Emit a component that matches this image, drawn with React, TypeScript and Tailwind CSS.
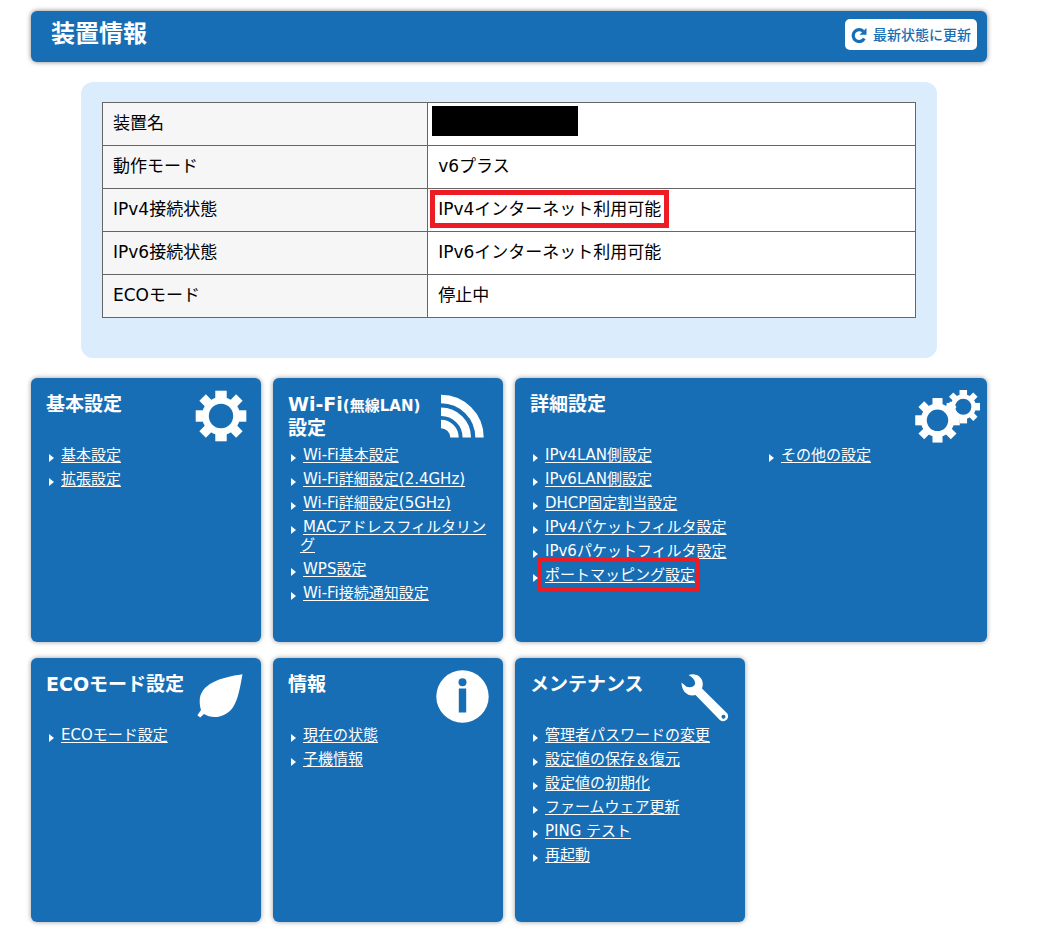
import type { ReactNode } from "react";

function GearShape({ cx, cy, scale }: { cx: number; cy: number; scale: number }) {
  return (
    <g transform={`translate(${cx} ${cy}) scale(${scale})`}>
      <circle r="15.6" fill="none" stroke="currentColor" strokeWidth="6.8" />
      {[0, 90, 180, 270].map((a) => (
        <rect key={a} x="-5.7" y="-25.3" width="11.4" height="10" transform={`rotate(${a})`} />
      ))}
      {[45, 135, 225, 315].map((a) => (
        <rect key={a} x="-4.6" y="-26" width="9.2" height="10" transform={`rotate(${a})`} />
      ))}
    </g>
  );
}

const GearIcon = () => (
  <svg width="52" height="52" viewBox="-26 -26 52 52" fill="currentColor" aria-hidden="true">
    <GearShape cx={0} cy={0} scale={1} />
  </svg>
);

const GearsIcon = () => (
  <svg width="66" height="54" viewBox="0 0 66 54" fill="currentColor" aria-hidden="true">
    <GearShape cx={22.5} cy={30.3} scale={0.88} />
    <GearShape cx={48.3} cy={16.7} scale={0.66} />
  </svg>
);

const WaveIcon = () => (
  <svg width="44" height="44" viewBox="0 0 44 44" fill="none" stroke="currentColor" strokeWidth="8.4" aria-hidden="true">
    <path d="M0 5A38.5 38.5 0 0 1 38.5 43.5M0 17.8A25.8 25.8 0 0 1 25.8 43.5M0 30A13.5 13.5 0 0 1 13.5 43.5" />
  </svg>
);

const LeafIcon = () => (
  <svg width="46" height="45" viewBox="-1 0 46 45" fill="currentColor" aria-hidden="true">
    <path d="M44.5.3C22 3.5 2 10 1.7 27C1.7 31 2.2 33.5 3 36L-.6 41.2L2.2 43.6L6 40C14 45.2 27 44 34.5 34C40 26 42 14 44.5.3Z" />
  </svg>
);

const InfoIcon = () => (
  <svg width="53" height="53" viewBox="0 0 53 53" aria-hidden="true">
    <circle cx="26.5" cy="26.5" r="26.2" fill="currentColor" />
    <circle cx="26.5" cy="12.2" r="4" fill="#186eb5" />
    <rect x="22.8" y="18.5" width="7.4" height="24" fill="#186eb5" />
  </svg>
);

const WrenchIcon = () => (
  <svg width="48" height="48" viewBox="0 0 48 48" fill="currentColor" aria-hidden="true">
    <path
      fillRule="evenodd"
      d="M7.5 1C15-1.5 21.8 3 21.8 10C21.8 11.5 21.5 13 21 14.5L45.6 38.8C50 43.5 44 49.8 38.8 46L14.5 21C8 23 .5 18.5.5 8.5L5.500 12.800C9 14 13 13 14 10C14.600 6.500 12 3.500 7.500 1ZM42.500 40.800A2 2 0 1 0 42.500 44.800A2 2 0 1 0 42.500 40.800Z"
    />
  </svg>
);

const RefreshIcon = () => (
  <svg width="16" height="16" viewBox="0 0 16 16" aria-hidden="true">
    <path d="M12.3 4.4A5.9 5.900 0 1 0 13.300 11.500" fill="none" stroke="currentColor" strokeWidth="3.2" />
    <path d="M15.500 1V7.700H8.500Z" fill="currentColor" />
  </svg>
);

function LinkList({ items, marked }: { items: string[]; marked?: string }) {
  return (
    <ul className="flex flex-col gap-1.5 text-[15px] leading-[18px]">
      {items.map((item) => (
        <li key={item} className="flex gap-1">
          <svg width="5" height="8" viewBox="0 0 5 8" className="mt-2 shrink-0" aria-hidden="true">
            <path d="M0 0L5 4L0 8Z" fill="white" />
          </svg>
          <span className="relative min-w-0 indent-[3px]">
            <a href="#" className="underline underline-offset-2">
              {item}
            </a>
            {item === marked && (
              <span className="pointer-events-none absolute -inset-x-1 -inset-y-2 border-4 border-[#ed1c24]" />
            )}
          </span>
        </li>
      ))}
    </ul>
  );
}

function Card({
  title,
  icon,
  iconPlace = "top-3 right-3.5",
  wide = false,
  children,
}: {
  title: ReactNode;
  icon: ReactNode;
  iconPlace?: string;
  wide?: boolean;
  children: ReactNode;
}) {
  return (
    <section
      className={`relative min-h-[264px] rounded-md bg-[#186eb5] pt-3.5 pb-4 text-white shadow-[0_0_5px_rgba(0,0,0,0.4)] ${
        wide ? "col-span-2" : ""
      }`}
    >
      <h2 className="min-h-12 pl-[15px] text-[19px] leading-6 font-bold whitespace-nowrap">{title}</h2>
      <div className={`absolute flex ${iconPlace}`}>{icon}</div>
      <div className={`mt-1.5 grid ${wide ? "grid-cols-2" : ""}`}>{children}</div>
    </section>
  );
}

const Column = ({ children }: { children: ReactNode }) => <div className="pr-3 pl-[18px]">{children}</div>;

const statusRows: { label: string; value: ReactNode }[] = [
  { label: "装置名", value: null },
  { label: "動作モード", value: "v6プラス" },
  {
    label: "IPv4接続状態",
    value: (
      <span className="relative inline-block align-top">
        IPv4インターネット利用可能
        <span className="pointer-events-none absolute -inset-2 border-[5px] border-[#ed1c24]" />
      </span>
    ),
  },
  { label: "IPv6接続状態", value: "IPv6インターネット利用可能" },
  { label: "ECOモード", value: "停止中" },
];

export default function App() {
  return (
    <main className="min-h-screen bg-white pt-[11px] pr-[65px] pb-3 pl-[31px] font-['DejaVu_Sans','Noto_Sans_CJK_JP',sans-serif] text-black">
      <header className="flex items-start justify-between rounded-md bg-[#186eb5] pt-2 pr-2.5 pb-3 pl-5 shadow-[0_0_5px_rgba(0,0,0,0.5)]">
        <h1 className="text-2xl leading-[30px] font-bold text-white">装置情報</h1>
        <button
          type="button"
          className="flex h-[31px] items-center gap-1.5 rounded-[5px] bg-white px-1.5 text-sm font-medium text-[#186eb5]"
        >
          <RefreshIcon />
          最新状態に更新
        </button>
      </header>

      <section className="mx-[50px] mt-5 rounded-xl bg-[#dbedfd] px-[21px] pt-5 pb-10">
        <table className="w-full border-collapse text-[17px] leading-[22px]">
          <tbody>
            {statusRows.map(({ label, value }) => (
              <tr key={label} className="h-[43px]">
                <th scope="row" className="w-2/5 border border-[#666] bg-[#f6f6f6] px-2.5 pb-0.5 text-left font-normal">
                  {label}
                </th>
                <td className={`border border-[#666] bg-white ${value ? "px-2.5 pb-0.5" : "px-1 pt-[3px] align-top"}`}>
                  {value ?? <div className="h-[30px] w-[146px] bg-black" />}
                </td>
              </tr>
            ))}
          </tbody>
        </table>
      </section>

      <div className="mt-5 grid grid-cols-4 gap-x-3 gap-y-4">
        <Card title="基本設定" icon={<GearIcon />}>
          <Column>
            <LinkList items={["基本設定", "拡張設定"]} />
          </Column>
        </Card>
        <Card
          title={
            <>
              Wi-Fi<span className="text-[15px] leading-none">(無線LAN)</span>
              <br />
              設定
            </>
          }
          icon={<WaveIcon />}
          iconPlace="top-4 right-[18px]"
        >
          <Column>
            <LinkList
              items={[
                "Wi-Fi基本設定",
                "Wi-Fi詳細設定(2.4GHz)",
                "Wi-Fi詳細設定(5GHz)",
                "MACアドレスフィルタリング",
                "WPS設定",
                "Wi-Fi接続通知設定",
              ]}
            />
          </Column>
        </Card>
        <Card title="詳細設定" icon={<GearsIcon />} iconPlace="top-3 right-1.5" wide>
          <Column>
            <LinkList
              items={[
                "IPv4LAN側設定",
                "IPv6LAN側設定",
                "DHCP固定割当設定",
                "IPv4パケットフィルタ設定",
                "IPv6パケットフィルタ設定",
                "ポートマッピング設定",
              ]}
              marked="ポートマッピング設定"
            />
          </Column>
          <Column>
            <LinkList items={["その他の設定"]} />
          </Column>
        </Card>
        <Card title="ECOモード設定" icon={<LeafIcon />} iconPlace="top-4 right-[18px]">
          <Column>
            <LinkList items={["ECOモード設定"]} />
          </Column>
        </Card>
        <Card title="情報" icon={<InfoIcon />}>
          <Column>
            <LinkList items={["現在の状態", "子機情報"]} />
          </Column>
        </Card>
        <Card title="メンテナンス" icon={<WrenchIcon />} iconPlace="top-4 right-4">
          <Column>
            <LinkList
              items={[
                "管理者パスワードの変更",
                "設定値の保存＆復元",
                "設定値の初期化",
                "ファームウェア更新",
                "PING テスト",
                "再起動",
              ]}
            />
          </Column>
        </Card>
      </div>
    </main>
  );
}
